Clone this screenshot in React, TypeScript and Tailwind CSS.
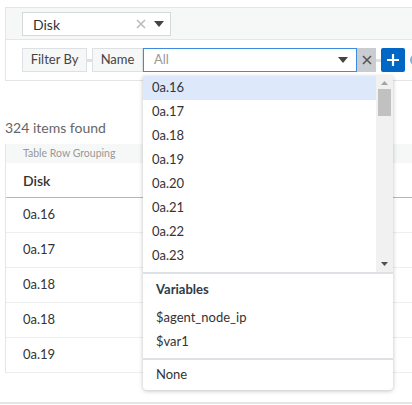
import React from 'react';

const listItems = ['0a.16', '0a.17', '0a.18', '0a.19', '0a.20', '0a.21', '0a.22', '0a.23'];
const rows = ['0a.16', '0a.17', '0a.18', '0a.18', '0a.19'];

function Caret({ className = '' }: { className?: string }) {
  return (
    <svg width="10" height="6" viewBox="0 0 10 6" className={className}>
      <path d="M0 0h10L5 6z" fill="currentColor" />
    </svg>
  );
}

function Cross({ size = 10, className = '' }: { size?: number; className?: string }) {
  return (
    <svg width={size} height={size} viewBox="0 0 10 10" className={className}>
      <path d="M1 1l8 8M9 1l-8 8" stroke="currentColor" strokeWidth="1.6" fill="none" />
    </svg>
  );
}

export default function App() {
  return (
    <div
      className="relative w-[412px] h-[405px] overflow-hidden bg-white text-[13px] text-[#333]"
      style={{ fontFamily: 'Lato, "Open Sans", sans-serif' }}
    >
      {/* Filter panel */}
      <div className="ml-[5px] mt-[7px] border border-r-0 border-[#e3e6e8] overflow-hidden">
        <div className="h-[32px] bg-[#f6f7f7] border-b border-[#e3e6e8] pt-[4px] pl-[16px]">
          <div className="w-[149px] h-[24px] bg-white border border-[#d5d9dc] flex items-center pl-[10px] pr-[6px]">
            <span className="flex-1 text-[#333] text-[14px]">Disk</span>
            <Cross size={10} className="text-[#b9bdc1] mr-[8px]" />
            <Caret className="text-[#444]" />
          </div>
        </div>
        <div className="h-[40px] flex items-center pl-[16px]">
          <div className="shrink-0 h-[24px] w-[65px] bg-[#f6f7f7] border border-[#dde1e5] flex items-center justify-center text-[#444]">
            Filter By
          </div>
          <div className="shrink-0 w-[5px] h-[3px] bg-[#dde1e5]" />
          <div className="shrink-0 h-[24px] w-[51px] bg-[#f6f7f7] border border-[#dde1e5] flex items-center justify-center text-[#444]">
            Name
          </div>
          <div className="shrink-0 h-[24px] w-[214px] border border-[#3c8be0] bg-white flex items-center pl-[10px] pr-[8px]">
            <span className="flex-1 text-[#999]">All</span>
            <Caret className="text-[#444]" />
          </div>
          <div className="shrink-0 h-[24px] w-[19px] bg-[#c9cdd1] flex items-center justify-center">
            <Cross size={10} className="text-[#555]" />
          </div>
          <div className="shrink-0 w-[5px] h-[3px] bg-[#dde1e5]" />
          <div className="shrink-0 h-[24px] w-[24px] bg-[#0067c5] rounded-[2px] flex items-center justify-center">
            <svg width="14" height="14" viewBox="0 0 14 14">
              <path d="M7 1v12M1 7h12" stroke="white" strokeWidth="2.2" />
            </svg>
          </div>
          <div className="shrink-0 ml-[5px] w-[12px] h-[12px] rounded-full border-2 border-[#7fb1e3]" />
        </div>
      </div>

      {/* Results */}
      <div className="pl-[5px] mt-[37px] text-[#666] text-[14px] leading-[20px]">324 items found</div>
      <div className="ml-[5px] mt-[6px] border-l border-[#e3e6e8]">
        <div className="h-[19px] bg-[#f6f7f7] pl-[17px] flex items-center text-[10.5px] text-[#999]">
          Table Row Grouping
        </div>
        <div className="h-[35px] border-b border-[#a7b9d0] pl-[17px] flex items-center font-semibold text-[14px] text-[#333]">
          Disk
        </div>
        {rows.map((r, i) => (
          <div key={i} className="h-[35px] border-b border-[#eceeef] pl-[17px] flex items-center text-[#333]">
            {r}
          </div>
        ))}
      </div>
      <div className="absolute left-0 right-0 top-[402px] h-[2px] bg-[#e3e6e8]" />

      {/* Dropdown */}
      <div className="absolute left-[143px] top-[76px] w-[250px] bg-white rounded-b-[4px] shadow-[0_1px_4px_rgba(0,0,0,0.25)] overflow-hidden">
        <div className="flex h-[196px]">
          <div className="flex-1">
            {listItems.map((it, i) => (
              <div
                key={it}
                className={`h-[24px] pl-[9px] flex items-center text-[#333] ${i === 0 ? 'bg-[#dde9fb]' : ''}`}
              >
                {it}
              </div>
            ))}
          </div>
          <div className="w-[17px] bg-[#f1f1f1] flex flex-col items-center">
            <svg width="7" height="4" viewBox="0 0 7 4" className="mt-[5px] text-[#a3a3a3]">
              <path d="M0 4h7L3.5 0z" fill="currentColor" />
            </svg>
            <div className="mt-[4px] w-[13px] h-[27px] bg-[#c1c1c1]" />
            <div className="flex-1" />
            <svg width="7" height="4" viewBox="0 0 7 4" className="mb-[6px] text-[#505050]">
              <path d="M0 0h7L3.5 4z" fill="currentColor" />
            </svg>
          </div>
        </div>
        <div className="border-t-2 border-[#dde1e5] pt-[4px] pb-[4px]">
          <div className="h-[24px] pl-[13px] flex items-center font-bold text-[#2d3a48]">Variables</div>
          <div className="h-[24px] mt-[4px] pl-[13px] flex items-center text-[#333]">$agent_node_ip</div>
          <div className="h-[24px] pl-[13px] flex items-center text-[#333]">$var1</div>
        </div>
        <div className="border-t-2 border-[#dde1e5] h-[32px] pl-[13px] flex items-center text-[#333]">None</div>
      </div>
    </div>
  );
}
